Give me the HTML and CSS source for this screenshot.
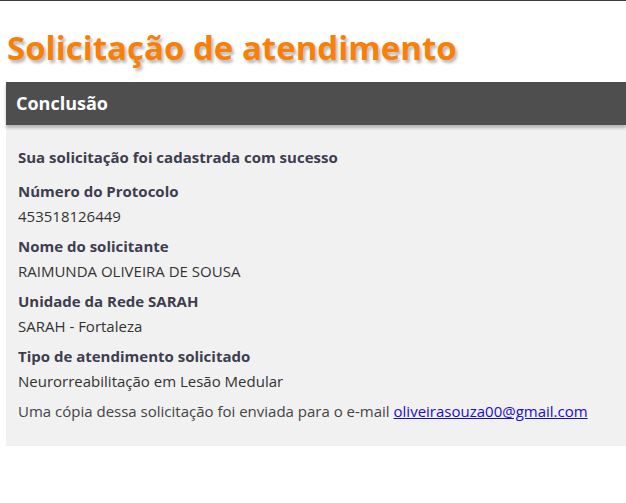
FILE: index.html
```html
<!DOCTYPE html>
<html lang="pt-BR">
<head>
<meta charset="utf-8">
<title>Solicitação de atendimento</title>
<link rel="stylesheet" href="styles.css">
</head>
<body>
<div class="page">
  <h1 class="title">Solicitação de atendimento</h1>
  <section class="panel">
    <h2 class="panel-head">Conclusão</h2>
    <div class="panel-body">
      <p class="lead">Sua solicitação foi cadastrada com sucesso</p>
      <div class="field">
        <div class="label">Número do Protocolo</div>
        <div class="value">453518126449</div>
      </div>
      <div class="field">
        <div class="label">Nome do solicitante</div>
        <div class="value">RAIMUNDA OLIVEIRA DE SOUSA</div>
      </div>
      <div class="field">
        <div class="label">Unidade da Rede SARAH</div>
        <div class="value">SARAH - Fortaleza</div>
      </div>
      <div class="field">
        <div class="label">Tipo de atendimento solicitado</div>
        <div class="value">Neurorreabilitação em Lesão Medular</div>
      </div>
      <p class="note">Uma cópia dessa solicitação foi enviada para o e-mail <a class="mail" href="#">oliveirasouza00@gmail.com</a></p>
    </div>
  </section>
</div>
</body>
</html>
```
FILE: styles.css
```css
html, body {
  margin: 0;
  padding: 0;
  background: #fff;
}
body {
  font-family: "Open Sans", "Noto Sans", sans-serif;
  border-top: 1px solid #3c3c3c;
}
.page {
  padding: 0 0 0 6px;
}
.title {
  margin: 0;
  padding: 27px 0 14px 1px;
  font-size: 33px;
  font-weight: 700;
  line-height: 40px;
  color: #f88008;
  text-shadow: 2px 3px 3px rgba(0,0,0,0.28);
}
.panel {
  background: #f1f1f1;
  padding-bottom: 22px;
}
.panel-head {
  margin: 0;
  height: 43px;
  line-height: 43px;
  padding-left: 10px;
  background: #4e4e4e;
  color: #fff;
  font-size: 18px;
  font-weight: 700;
  box-shadow: 0 3px 3px rgba(0,0,0,0.25);
}
.panel-body {
  padding: 20px 12px 0;
  color: #333;
  font-size: 15px;
  line-height: 25px;
}
.lead {
  margin: 0 0 9px;
  font-weight: 700;
  color: #3d3d4f;
}
.field {
  margin-bottom: 5px;
}
.label {
  font-weight: 700;
  color: #3d3d4f;
}
.value {
  color: #333;
}
.note {
  margin: 0;
  color: #444;
}
.mail {
  color: #1a0dcc;
  text-decoration: underline;
}
```
